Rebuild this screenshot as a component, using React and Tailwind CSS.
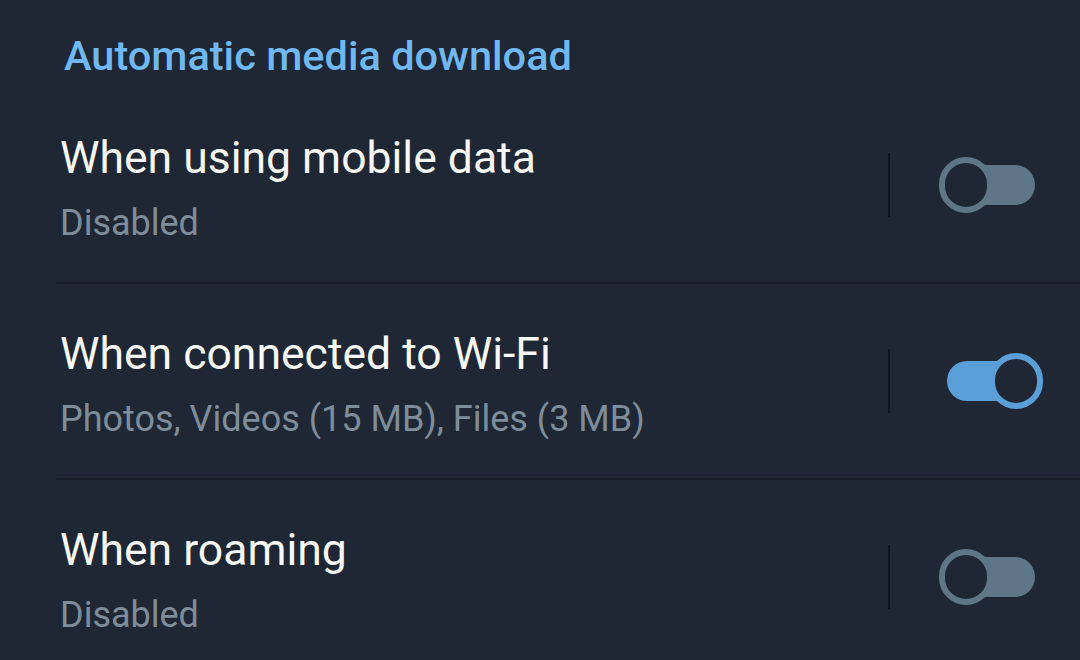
const rows = [
  { title: 'When using mobile data', subtitle: 'Disabled', on: false },
  { title: 'When connected to Wi-Fi', subtitle: 'Photos, Videos (15 MB), Files (3 MB)', on: true },
  { title: 'When roaming', subtitle: 'Disabled', on: false },
]

function Toggle({ on }) {
  return (
    <div className="relative w-[104px] h-[56px] shrink-0">
      <div
        className={`absolute left-[8px] top-[8px] w-[88px] h-[40px] rounded-full ${on ? 'bg-[#5a9fd8]' : 'bg-[#5f7686]'}`}
      />
      <div
        className={`absolute top-0 w-[54px] h-[56px] rounded-full bg-[#1e2733] border-[6px] ${on ? 'left-[50px] border-[#5a9fd8]' : 'left-0 border-[#5f7686]'}`}
      />
    </div>
  )
}

export default function App() {
  return (
    <div className="w-[1080px] h-[660px] overflow-hidden bg-[#1e2733] font-['Roboto',sans-serif]">
      {/* Section header */}
      <div className="pt-[31px] pb-[8px] pl-[64px]">
        <h2 className="text-[41.5px] leading-[49px] font-medium text-[#6fb8f2]">Automatic media download</h2>
      </div>

      {rows.map((row) => (
        <div key={row.title} className="ml-[56px] border-b-2 border-[#151c25] flex items-center">
          <div className="flex-1 pl-[4px] pt-[46px] pb-[38px]">
            <div className="text-[44.5px] leading-[49px] text-[#f8f8f8]">{row.title}</div>
            <div className="mt-[20px] text-[36px] leading-[41px] text-[#7f8d9b]">{row.subtitle}</div>
          </div>
          <div className="w-[2px] h-[64px] bg-[#10161d]" />
          <div className="ml-[49px] mr-[37px]">
            <Toggle on={row.on} />
          </div>
        </div>
      ))}
    </div>
  )
}
